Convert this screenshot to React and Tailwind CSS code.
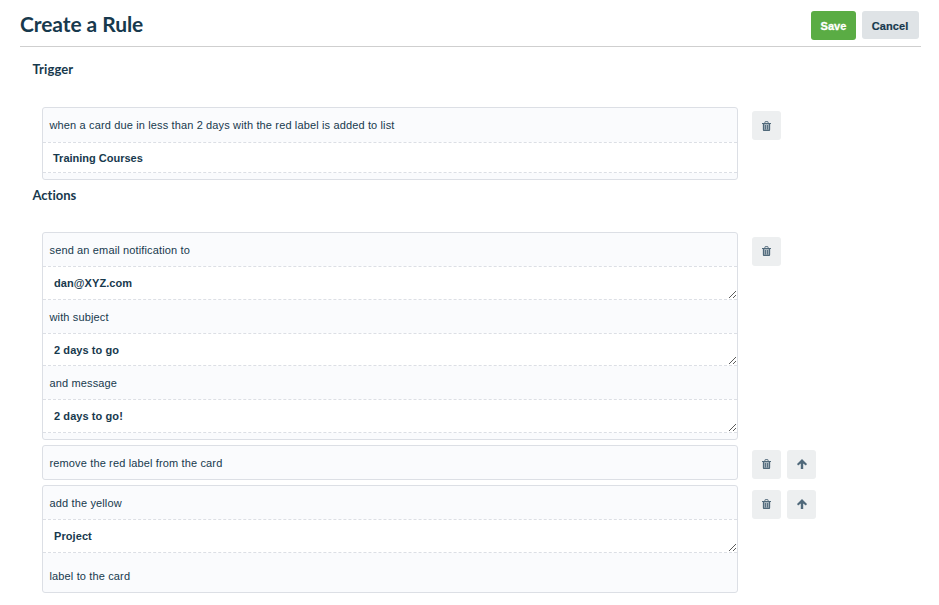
const trigger = {
  fields: [
    { kind: "label", text: "when a card due in less than 2 days with the red label is added to list", size: "h-[34px]" },
    { kind: "list", text: "Training Courses", size: "h-[31px]" },
  ],
  footer: true,
}

const actions = [
  {
    fields: [
      { kind: "label", text: "send an email notification to", size: "h-[33px]" },
      { kind: "input", text: "dan@XYZ.com", size: "h-[34px]" },
      { kind: "label", text: "with subject", size: "h-[33px]" },
      { kind: "input", text: "2 days to go", size: "h-[33px]" },
      { kind: "label", text: "and message", size: "h-[33px]" },
      { kind: "input", text: "2 days to go!", size: "h-[34px]" },
    ],
    footer: true,
    offset: "pt-[5px]",
    iconOffset: "pb-px",
  },
  {
    fields: [{ kind: "label", text: "remove the red label from the card", size: "h-[33px]" }],
    movable: true,
    offset: "pt-[5px]",
    iconOffset: "pb-px",
  },
  {
    fields: [
      { kind: "label", text: "add the yellow", size: "h-[33px]" },
      { kind: "input", text: "Project", size: "h-[34px]" },
      { kind: "label", text: "label to the card", size: "h-[39px] pt-[6px]" },
    ],
    movable: true,
    offset: "pt-[5px]",
    iconOffset: "pb-px",
  },
]

function TrashIcon() {
  return (
    <svg width="9" height="10" viewBox="0 0 9 10" fill="none" stroke="#50697a">
      <path d="M1 2.5h7V9.5H1z" fill="#a9b6be" stroke="none" />
      <path d="M0 2.5h9" />
      <path d="M2.7 2.2L3.2.6h2.6l.5 1.6" strokeWidth="0.9" />
      <path d="M1.5 2.5v6.2q0 .8.8.8h4.4q.8 0 .8-.8V2.5" strokeWidth="1.3" />
      <path d="M3.5 4v4.5M5.5 4v4.5" strokeWidth="0.9" />
    </svg>
  )
}

function ArrowUpIcon() {
  return (
    <svg width="10" height="10" viewBox="0 0 10 10" fill="#50697a">
      <path d="M5 0l5 4.9-1.1 1.5L6.2 4.5V10H3.8V4.5L1.1 6.4 0 4.9z" />
    </svg>
  )
}

function ResizeGrip() {
  return (
    <svg className="absolute right-px bottom-px" width="7" height="7" viewBox="0 0 7 7" fill="none" stroke="#4a4a4a">
      <path d="M0 7L7 0M4 7l3-3" strokeWidth="0.9" />
    </svg>
  )
}

function IconButton({ label, iconOffset, children }) {
  return (
    <button aria-label={label} className={`w-[29px] h-[29px] flex items-center justify-center rounded-[3px] bg-[#edeff0] ${iconOffset}`}>
      {children}
    </button>
  )
}

function Field({ kind, text, size }) {
  if (kind === "label") {
    return <div className={`${size} flex items-center pl-[6.5px] tracking-[0.14px]`}>{text}</div>
  }

  return (
    <div className={`${size} relative flex items-center bg-white border-y border-dashed border-[#dcdfe5] font-bold ${kind === "list" ? "pl-[10px]" : "pl-[11px] tracking-[0.08px]"}`}>
      {text}
      {kind === "input" && <ResizeGrip />}
    </div>
  )
}

function RuleRow({ fields, footer, movable, offset = "pt-[4px]", iconOffset = "pt-px" }) {
  return (
    <div className="flex items-start">
      <div className="w-[696px] border border-[#dcdfe5] rounded-[3px] bg-[#fafbfd] overflow-hidden">
        {fields.map((field, idx) => (
          <Field key={idx} {...field} />
        ))}
        {footer && <div className="h-[6px]" />}
      </div>
      <div className={`flex gap-[6px] ml-[14px] ${offset}`}>
        <IconButton label="Delete" iconOffset={iconOffset}>
          <TrashIcon />
        </IconButton>
        {movable && (
          <IconButton label="Move up" iconOffset={iconOffset}>
            <ArrowUpIcon />
          </IconButton>
        )}
      </div>
    </div>
  )
}

export default function App() {
  return (
    <div className="w-[939px] h-[605px] overflow-hidden bg-white text-[#17394d] text-[11px] leading-[14px] font-['Liberation_Sans',Arial,sans-serif]">
      {/* Header */}
      <header className="ml-5 mr-[18px] h-[47px] border-b border-[#cfcfcf] flex justify-between items-start pr-[2px]">
        <h1 className="pt-[10px] font-['Lato',sans-serif] font-bold text-[21px] leading-[27px] tracking-[-0.08px]">Create a Rule</h1>
        <div className="flex gap-[6px] pt-[11px] font-bold tracking-[0.1px]">
          <button className="w-[45px] h-[29px] rounded-[3px] bg-[#5aac44] text-white [-webkit-text-stroke:0.3px]">Save</button>
          <button className="w-[57px] h-[28px] pt-px pr-px rounded-[3px] bg-[#dfe3e6] [-webkit-text-stroke:0.2px]">Cancel</button>
        </div>
      </header>

      {/* Trigger */}
      <section className="pt-[12px]">
        <h2 className="pl-[32.5px] h-[48px] font-['Lato',sans-serif] font-bold text-[13px] leading-[20px] tracking-[0.1px]">Trigger</h2>
        <div className="pl-[42px]">
          <RuleRow {...trigger} />
        </div>
      </section>

      {/* Actions */}
      <section className="pt-[5px]">
        <h2 className="pl-[32.5px] h-[47px] font-['Lato',sans-serif] font-bold text-[13px] leading-[20px] [font-variant-ligatures:none]">Actions</h2>
        <div className="pl-[42px] flex flex-col gap-[5px]">
          {actions.map((action, idx) => (
            <RuleRow key={idx} {...action} />
          ))}
        </div>
      </section>
    </div>
  )
}
